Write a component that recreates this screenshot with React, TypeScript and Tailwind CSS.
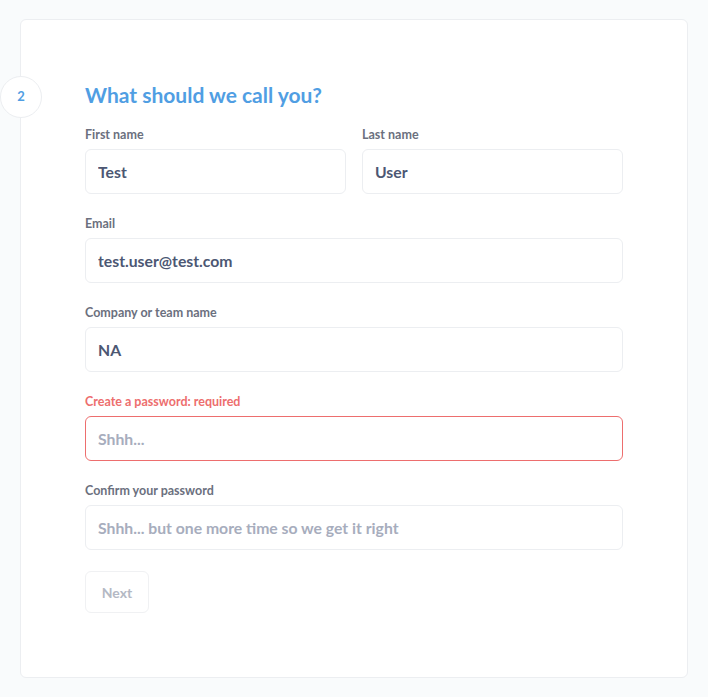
import React from "react";

function Field({
  label,
  value,
  placeholder,
  error,
}: {
  label: string;
  value?: string;
  placeholder?: string;
  error?: boolean;
}) {
  return (
    <div className="flex flex-col">
      <label
        className={`text-[12.5px] leading-[16px] font-bold pt-[1px] mb-[6px] ${
          error ? "text-[#ed6e6e]" : "text-[#6b707e]"
        }`}
      >
        {label}
      </label>
      <input
        readOnly
        defaultValue={value}
        placeholder={placeholder}
        className={`h-[45px] w-full rounded-[6px] border bg-white px-[12px] text-[15.75px] font-bold text-[#4c5773] placeholder:text-[#a7adbd] outline-none ${
          error ? "border-[#ed6e6e]" : "border-[#eceef1]"
        }`}
        style={{ fontFamily: "Lato, 'Noto Sans', sans-serif" }}
      />
    </div>
  );
}

export default function App() {
  return (
    <div
      className="min-h-screen bg-[#f9fbfc] pt-[19px] pb-[19px] px-[20px]"
      style={{ fontFamily: "Lato, 'Noto Sans', sans-serif" }}
    >
      <div className="relative rounded-[6px] border border-[#eceef1] bg-white pt-[63px] pb-[64px] px-[64px]">
        <div className="absolute left-[-21px] top-[56px] flex h-[42px] w-[42px] items-center justify-center rounded-full border border-[#eceef1] bg-white text-[13px] font-bold text-[#509ee3]">
          2
        </div>
        <h2 className="text-[21px] leading-[24px] font-bold text-[#509ee3] mb-[19px]">
          What should we call you?
        </h2>
        <div className="flex flex-col gap-[21px]">
          <div className="grid grid-cols-2 gap-[16px]">
            <Field label="First name" value="Test" />
            <Field label="Last name" value="User" />
          </div>
          <Field label="Email" value="test.user@test.com" />
          <Field label="Company or team name" value="NA" />
          <Field label="Create a password: required" placeholder="Shhh..." error />
          <Field
            label="Confirm your password"
            placeholder="Shhh... but one more time so we get it right"
          />
          <div>
            <button className="h-[42px] w-[64px] rounded-[6px] border border-[#f0f1f3] bg-white text-[14px] font-bold text-[#b4b9c4]">
              Next
            </button>
          </div>
        </div>
      </div>
    </div>
  );
}
